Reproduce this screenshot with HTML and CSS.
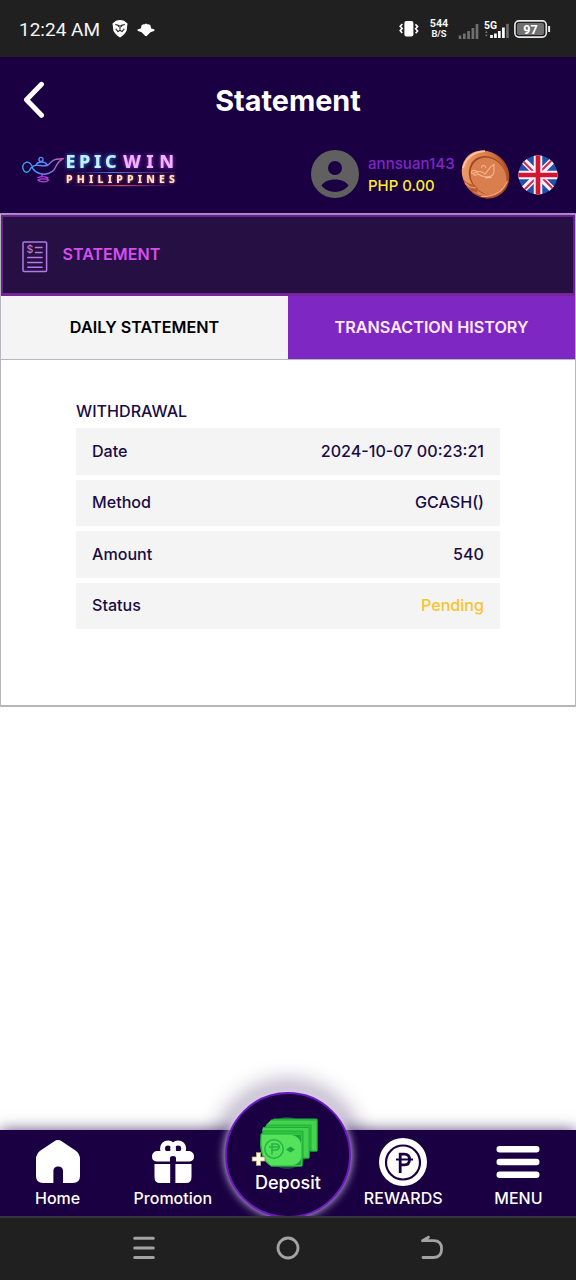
FILE: index.html
```html
<!DOCTYPE html>
<html lang="en">
<head>
<meta charset="utf-8">
<title>Statement</title>
<link rel="stylesheet" href="styles.css">
</head>
<body>
<div class="screen">
  <div class="status-bar">
    <span class="clock">12:24 AM</span>
    <svg class="ico-brave" width="16" height="18" viewBox="0 0 16 18"><path d="M4 .8Q8-.6 12 .8L15.5 3.6 14.6 10.5Q13.8 13.6 8 17.6 2.2 13.6 1.4 10.5L.5 3.6Z" fill="#fff"/><path d="M3.2 4.5 6.8 5.4 6.4 6.8M12.8 4.5 9.2 5.4 9.6 6.8M3.7 8.8 6 11.6 8 10.2 10 11.6 12.3 8.8M8 5.4V9.5" fill="none" stroke="#202020" stroke-width="1.1"/></svg>
    <svg class="ico-hat" width="18" height="14" viewBox="0 0 18 14"><path d="M4.6 2.2Q6 1.2 7.2 1.4L9 .4 10.8 1.4Q12 1.2 13.4 2.2L14.2 5.6 17 6.2Q18.3 7.1 17 8L13.4 9.2 10.2 12.6Q9 13.8 7.8 12.6L4.6 9.2 1 8Q-.3 7.1 1 6.2L3.8 5.6Z" fill="#fff"/></svg>
    <div class="status-right">
      <svg width="20" height="18" viewBox="0 0 20 18"><rect x="5.4" y="1" width="9" height="15.6" rx="2" fill="#fff"/><path d="M3.4 4 1.2 6.2 3.2 8.4 1.2 10.6 3.2 13M16.4 4.4 18.6 6.6 16.6 8.8 18.6 11 16.6 13.2" fill="none" stroke="#fff" stroke-width="1.6"/></svg>
      <div class="rate"><span class="rate-n">544</span><span class="rate-u">B/S</span></div>
      <svg class="sig-a" width="21" height="16" viewBox="0 0 21 16"><path d="M2 16V12.5M6.3 16V10.5M10.6 16V8M14.9 16V5M19 16V1" stroke="#707070" stroke-width="2.7"/></svg>
      <svg class="sig-b" width="25" height="19" viewBox="0 0 25 19"><text x="0" y="8.8" font-size="10.5" textLength="13" lengthAdjust="spacingAndGlyphs" class="five">5G</text><path d="M1 12.7 2.3 11 3.7 12.7ZM1 14.7 2.3 16.5 3.7 14.7Z" fill="#888"/><path d="M7.5 18V15M11.4 18V13.6M15.3 18V11M19.4 18V7.5" stroke="#fff" stroke-width="2.7"/><path d="M23.5 18V3.8" stroke="#707070" stroke-width="2.5"/></svg>
      <svg class="batt" width="37" height="18" viewBox="0 0 37 18"><rect x=".9" y=".9" width="31.4" height="16.2" rx="4" fill="none" stroke="#e8e8e8" stroke-width="1.6"/><rect x="3" y="3" width="27" height="12" rx="2" fill="#707070"/><path d="M35.1 6V12" stroke="#e8e8e8" stroke-width="2"/><text x="16.4" y="13.5" font-size="12.6" text-anchor="middle" class="five">97</text></svg>
    </div>
  </div>

  <header class="title-bar">
    <svg width="24" height="38" viewBox="0 0 24 38"><path d="M20.5 3.3 5.5 18.8 20.5 34.3" fill="none" stroke="#fff" stroke-width="5" stroke-linecap="round" stroke-linejoin="round"/></svg>
    <h1>Statement</h1>
  </header>

  <div class="account-bar">
    <svg class="logo" width="160" height="44" viewBox="0 0 160 44">
      <defs>
        <linearGradient id="lamp" gradientUnits="userSpaceOnUse" x1="2" y1="0" x2="44" y2="0"><stop offset="0" stop-color="#3ca5f5"/><stop offset=".6" stop-color="#5b84f0"/><stop offset="1" stop-color="#e64fac"/></linearGradient>
        <linearGradient id="lineA" x1="0" x2="1"><stop offset="0" stop-color="#3050d0" stop-opacity="0"/><stop offset=".4" stop-color="#4b80ee"/><stop offset="1" stop-color="#b040c0" stop-opacity=".2"/></linearGradient>
        <linearGradient id="lineB" x1="0" x2="1"><stop offset="0" stop-color="#d04050" stop-opacity="0"/><stop offset=".5" stop-color="#dc4560"/><stop offset="1" stop-color="#b040c0" stop-opacity="0"/></linearGradient>
      </defs>
      <g fill="none" stroke="url(#lamp)" stroke-width="1.4" stroke-linecap="round" stroke-linejoin="round">
        <path d="M13 17C11.5 12 9 9.5 6 10.3 2.5 11.5 2 15.5 3.5 18 5 21 8 21 9.5 18.5 11 15 13.5 13.3 16.5 13.2 20 13 24 15 28 13 31 11 31.5 8 36 7.3L43.3 6.7C39.5 8.5 38 10.5 36.3 13.7 34.5 18.5 30 21.8 24 22.3 18.5 22 15 19.5 13 17M16 13C17 10.8 19 10 21.5 10 24 10 26 11 27 12.7"/>
        <circle cx="21" cy="7.4" r="2"/>
        <path d="M22.5 22.5 21.5 25M18 25.6Q23 23.5 28 26M18 28C20 26.5 27 26.5 28.5 28 27 30.5 20 30.5 18 28" stroke="#b043dc"/>
      </g>
      <g class="glow-blue"><text x="45.5" y="16.1" font-size="18" textLength="51" class="brand" fill="#c4efff">EPIC</text></g>
      <g class="glow-pink"><text x="103" y="16.1" font-size="18" textLength="51" class="brand" fill="#efb6ff">WIN</text></g>
      <rect x="50" y="20" width="105" height="1" fill="url(#lineA)"/>
      <g class="glow-red"><text x="46" y="30.8" font-size="10.5" textLength="109" class="brand" fill="#ffe6cf">PHILIPPINES</text></g>
      <rect x="50" y="33" width="102" height="1.2" fill="url(#lineB)"/>
    </svg>
    <svg class="avatar" width="48" height="48" viewBox="0 0 48 48"><circle cx="24" cy="24" r="24" fill="#606060"/><circle cx="24" cy="18" r="7" fill="#1a0042"/><path d="M10.5 35.5C15 27.5 33 27.5 37.5 35.5 31 44 17 44 10.5 35.5Z" fill="#1a0042"/></svg>
    <div class="who"><span class="name">annsuan143</span><span class="money">PHP 0.00</span></div>
    <svg class="coin" width="49" height="49" viewBox="0 0 49 49">
      <defs><linearGradient id="cop" x1="0" y1="0" x2="1" y2="1"><stop offset="0" stop-color="#f3a878"/><stop offset=".5" stop-color="#dc7f4d"/><stop offset="1" stop-color="#a94521"/></linearGradient></defs>
      <ellipse cx="25" cy="24.8" rx="22.5" ry="24.5" transform="rotate(-40 25 24.8)" fill="#a84f2e"/>
      <ellipse cx="23.2" cy="23.3" rx="21.5" ry="23.8" transform="rotate(-40 23.2 23.3)" fill="url(#cop)"/>
      <path d="M2 18Q7 2 24 1.2" fill="none" stroke="#ffc7a0" stroke-width="1.8"/>
      <ellipse cx="26.5" cy="25.5" rx="17.5" ry="20.5" transform="rotate(-38 26.5 25.5)" fill="#9f4724"/>
      <ellipse cx="27.4" cy="26.3" rx="16.8" ry="19.8" transform="rotate(-38 27.4 26.3)" fill="#d97e4e"/>
      <path d="M11 24C9 20.5 14 19 16 22S13 26.5 12 23.5C18 20 21 21.5 24 24 27 22 27 17 33 14.5 32 18 35 22 31 25.5 27 28 21 27 17 24M21 18C19 15.5 24 14 25 18M24 28 31 27.5" fill="none" stroke="#f8b68e" stroke-width="1.1"/>
      <path d="M2 29Q5 33 9 34L14 35 17 39 16 43 9 40Q4 36 2 29Z" fill="#bc5c30"/><path d="M4 33 9 37 15 38M20 46.5Q40 47 46.5 31" stroke="#f3a273" stroke-width="1.2" fill="none"/>
    </svg>
    <svg class="flag" width="40" height="40" viewBox="0 0 40 40"><defs><clipPath id="round"><circle cx="20" cy="20" r="19.6"/></clipPath></defs>
      <g clip-path="url(#round)"><path fill="#2350a5" d="M0 0H40V40H0Z"/><path d="M4 4 36 36M36 4 4 36" stroke="#f5efff" stroke-width="6.5"/><path d="M4 5.3 18 19.3M22 20.7 36 34.7M35 4 21 18M5 36 19 22" stroke="#d52945" stroke-width="2"/><path d="M20 0V40M0 20H40" stroke="#f5efff" stroke-width="8.5"/><path d="M20 0V40M0 20H40" stroke="#d3152f" stroke-width="4.6"/></g></svg>
  </div>

  <main class="panel">
    <div class="panel-head">
      <svg width="26" height="32" viewBox="0 0 26 32"><g fill="none" stroke="#b278e6" stroke-width="1.5"><rect x="1" y="1" width="23.6" height="29.6" rx="1"/><path d="M13.5 6.5H20M13.5 11.6H20M5.8 16.4H20M5.8 21.4H20M5.8 26.2H20" stroke-linecap="round"/></g><text x="7.9" y="12" text-anchor="middle" class="dollar">$</text></svg>
      <span>STATEMENT</span>
    </div>
    <div class="tabs"><div class="tab">DAILY STATEMENT</div><div class="tab tab-on">TRANSACTION HISTORY</div></div>
    <section class="details">
      <h2>WITHDRAWAL</h2>
      <div class="row"><span>Date</span><span>2024-10-07 00:23:21</span></div>
      <div class="row"><span>Method</span><span>GCASH()</span></div>
      <div class="row"><span>Amount</span><span>540</span></div>
      <div class="row"><span>Status</span><span class="pending">Pending</span></div>
    </section>
  </main>

  <nav class="tabbar">
    <div class="item"><svg width="46" height="44" viewBox="0 0 46 44"><path d="M19 1.4Q23-1.2 27 1.4L40.5 10.5Q45 14 45 19V36Q45 43 38 43H28V31Q28 26.5 23.2 26.5T18.4 31V43H8Q1 43 1 36V19Q1 14 5.5 10.5Z" fill="#fff"/></svg><span>Home</span></div>
    <div class="item"><svg width="42" height="44" viewBox="0 0 42 44"><g fill="none" stroke="#fff" stroke-width="5"><circle cx="16" cy="8.5" r="5.5"/><circle cx="26.2" cy="8.5" r="5.5"/></g><path d="M4.5 11H37.5Q42 12 42 16.5T37.5 21.5H24V18Q24 16 21 16T18 18V21.5H4.5Q0 21 0 16.5T4.5 11ZM2.5 24H18.2V43H8Q2.5 43 2.5 37ZM23.4 24H39.5V37Q39.5 43 34 43H23.4Z" fill="#fff"/></svg><span>Promotion</span></div>
    <div class="item item-mid"><div class="deposit">
      <svg width="70" height="54" viewBox="0 0 70 54">
        <ellipse cx="36" cy="27" rx="23" ry="26" fill="#2b6250" opacity=".65"/>
        <g stroke="#1fae3c" stroke-width="1"><path d="M23 3H66V35H58V42H51V50H20Q8 42 10 24 11 10 23 3Z" fill="#2fc83d"/><path d="M20 4H66V35H60V9H15M12 11.5H58V42H52V15H11" fill="#45d34d"/><path d="M10 18H51V50H20Q8 43 10 18Z" fill="#55e25b"/></g>
        <path d="M41 19H50V28Q49 21 41 19M50 42V49H43Q49 47 50 42" fill="#18a53a"/><path d="M35 33.5 39.5 30.5 44 33.5 39.5 36.5Z" fill="#18a53a"/>
        <circle cx="23" cy="33" r="9.2" fill="none" stroke="#25b344" stroke-width="1.5"/><path d="M21 38.5V28H25Q28 28 28 31T25 34H21M18 31H29" fill="none" stroke="#25b344" stroke-width="1.5"/>
        <path d="M7.5 36V50M.8 43H14.5" stroke="#9e8668" stroke-width="5"/><path d="M7.5 37V49M1.5 43H13.5" stroke="#fffbe4" stroke-width="3.6"/>
      </svg><span>Deposit</span></div></div>
    <div class="item"><svg class="reward" width="50" height="48" viewBox="0 0 50 48"><circle cx="25" cy="24" r="24" fill="#fff"/><circle cx="25" cy="24.5" r="17" fill="#fff" stroke="#1a0042" stroke-width="2.2"/><path d="M22.2 35V16.2H26.5Q31.5 16.2 31.5 21.5T26.5 26.8H22.2" fill="none" stroke="#1a0042" stroke-width="2.8"/><path d="M18 21.5H35" stroke="#1a0042" stroke-width="2"/></svg><span>REWARDS</span></div>
    <div class="item"><svg width="44" height="44" viewBox="0 0 44 44"><path d="M3.7 9.3H40.3M3.7 22H40.3M3.7 34.7H40.3" stroke="#fff" stroke-width="6.4" stroke-linecap="round"/></svg><span>MENU</span></div>
  </nav>

  <footer class="system-nav">
    <svg width="24" height="26" viewBox="0 0 24 26"><path d="M2.7 3.3H21.3M2.7 12.9H21.3M2.7 22.5H21.3" stroke="#a3a3a3" stroke-width="3" stroke-linecap="round"/></svg>
    <svg width="24" height="26" viewBox="0 0 24 26"><circle cx="12" cy="13" r="10" fill="none" stroke="#a3a3a3" stroke-width="2.8"/></svg>
    <svg width="24" height="26" viewBox="0 0 24 26"><path d="M2.5 5.7H13.7Q21.6 5.7 21.6 14T13.7 22.5H3M2.5 5.7 8.5 2.2" fill="none" stroke="#a3a3a3" stroke-width="2.8" stroke-linecap="round" stroke-linejoin="round"/></svg>
  </footer>
</div>
</body>
</html>
```

FILE: styles.css
```css
* { box-sizing: border-box; }
body { margin: 0; background: #fff; font-family: Inter, sans-serif; }
.screen { width: 576px; height: 1280px; display: flex; flex-direction: column; overflow: hidden; }
svg { display: block; flex: none; }

.status-bar { height: 57px; flex: none; background: #202020; color: #f4f4f4; display: flex; align-items: center; padding: 1px 25px 0 19px; }
.clock { font: 19px/24px Roboto, sans-serif; width: 81px; white-space: nowrap; padding-top: 2px; }
.ico-brave { margin-left: 12px; }
.ico-hat { margin-left: 9px; margin-top: 1px; }
.status-right { margin-left: auto; display: flex; align-items: center; }
.rate { width: 22px; margin-left: 9px; display: flex; flex-direction: column; align-items: center; font-family: Roboto, sans-serif; font-weight: 700; }
.rate-n { font-size: 10.8px; line-height: 10px; }
.rate-u { font-size: 9.4px; line-height: 10px; }
.sig-a { margin: 3px 0 0 8px; }
.sig-b { margin-left: 5px; }
.batt { margin-left: 5px; }
.five { font-family: Roboto, sans-serif; font-weight: 700; fill: #fff; }

.title-bar { height: 86px; flex: none; background: #1a0042; display: grid; grid-template-columns: 24px 1fr 24px; align-items: center; padding: 0 20px; }
.title-bar svg { margin-left: 1px; }
.title-bar h1 { margin: 1px 0 0; color: #fff; font-size: 28.8px; line-height: 36px; font-weight: 700; text-align: center; }

.account-bar { height: 70px; flex: none; background: #1a0042; display: flex; align-items: center; padding: 0 18px 8px 20px; }
.logo { overflow: visible; }
.brand { font-family: "Noto Sans", sans-serif; font-weight: 800; }
.glow-blue { filter: drop-shadow(0 0 2px #278bf5); }
.glow-pink { filter: drop-shadow(0 0 2px #a332df); }
.glow-red { filter: drop-shadow(0 0 1.5px #e45a45); }
.avatar { margin-left: 131px; }
.who { width: 88px; margin: 2px 0 0 9px; display: flex; flex-direction: column; white-space: nowrap; line-height: 22px; }
.name { color: #7e27c4; font-size: 15.1px; font-weight: 500; }
.money { color: #fdec35; font-size: 14.9px; font-weight: 500; }
.coin { margin-left: 5px; }
.flag { margin: 2px 0 0 8px; }

.panel { height: 494px; flex: none; border: 1px solid #b9b5bd; border-width: 2px 1.5px; border-top-color: #ae83cb; display: flex; flex-direction: column; }
.panel-head { height: 81px; flex: none; border: 2px solid #64238a; border-bottom: 3px solid #782397; background: #260f42; display: flex; align-items: center; gap: 15px; padding: 3px 18.5px 0; color: #d84df0; font-size: 16.1px; font-weight: 600; }
.panel-head span { margin-top: -5px; }
.dollar { font: 500 10.5px Inter, sans-serif; fill: #b278e6; }
.tabs { height: 64px; flex: none; display: grid; grid-template-columns: 1fr 1fr; border-bottom: 1.5px solid #b9b5bd; }
.tab { background: #f4f4f4; color: #000; font-size: 16.2px; font-weight: 600; display: grid; place-items: center; padding-bottom: 1px; }
.tab-on { background: #7f27c3; color: #fdeaff; }
.details { padding: 40px 75px 0; color: #1a0c45; display: flex; flex-direction: column; gap: 5px; }
.details h2 { font-size: 16.1px; line-height: 22px; font-weight: 450; margin: 0 0 1px; }
.row { height: 46.5px; background: #f4f4f4; display: flex; align-items: center; justify-content: space-between; padding: 0 16px 1px; font-size: 16.1px; font-weight: 500; }
.pending { color: #f9c32b; }

.tabbar { height: 86px; flex: none; margin-top: auto; background: #1a0042; color: #fff; display: grid; grid-template-columns: repeat(5, minmax(0, 1fr)); box-shadow: 0 0 14px #1a0042b0; }
.item { display: flex; flex-direction: column; align-items: center; padding-top: 10px; font-size: 16px; font-weight: 500; line-height: 22px; gap: 3px; white-space: nowrap; }
.item .reward { margin: -2px 0; }
.item-mid { width: 235px; height: 173px; margin-top: -87px; padding-top: 49px; justify-self: center; overflow: hidden; }
.deposit { width: 126px; height: 126px; flex: none; border-radius: 50%; border: 2px solid #6b18bf; background: #1a0042; box-shadow: 0 0 10px #e9dcff, 0 0 20px 13px #1a004248; display: flex; flex-direction: column; align-items: center; padding-top: 22px; font-size: 18px; }
.deposit svg { margin-right: 4px; }
.deposit span { margin-top: 2px; }

.system-nav { height: 64px; flex: none; background: #202020; border-top: 2px solid #38343d; display: flex; justify-content: center; gap: 120px; padding-top: 17px; position: relative; }
```
